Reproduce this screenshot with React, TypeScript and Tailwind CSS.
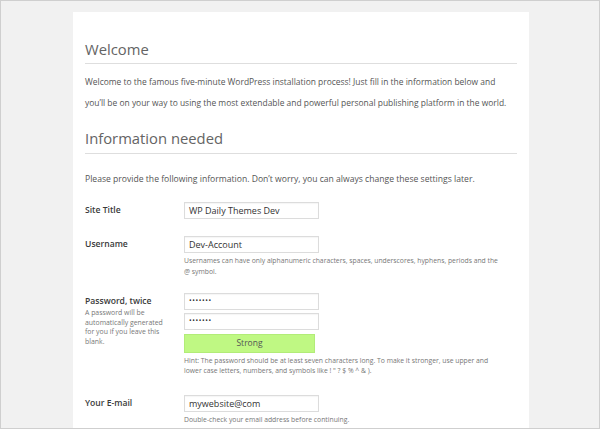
import React from "react";

const font = "font-['Open_Sans','Noto_Sans',sans-serif]";

interface FieldProps {
  label: string;
  children: React.ReactNode;
  note?: React.ReactNode;
  className?: string;
}

const Field: React.FC<FieldProps> = ({ label, children, note, className }) => {
  return (
    <div className={"flex " + (className ?? "")}>
      <div className="w-[99px] shrink-0 pt-[2px]">
        <p className="text-[8.6px] font-semibold leading-[12px] text-[#3a3a3a]">{label}</p>
        {note}
      </div>
      <div className="flex flex-col">{children}</div>
    </div>
  );
};

const TextBox: React.FC<{ value: string; dots?: boolean }> = ({ value, dots }) => {
  return (
    <div className="flex h-[17px] w-[135px] items-center border border-[#dcdcdc] bg-white pl-[4px] shadow-[inset_0_1px_1px_rgba(0,0,0,0.04)]">
      <span className={dots ? "text-[7px] tracking-[0.6px] text-[#333]" : "text-[9px] text-[#333]"}>{value}</span>
    </div>
  );
};

const Hint: React.FC<{ children: React.ReactNode; className?: string }> = ({ children, className }) => (
  <p className={"whitespace-nowrap text-[6.8px] text-[#777] " + (className ?? "")}>{children}</p>
);

export default function App() {
  return (
    <div className={"h-[429px] w-[600px] overflow-hidden border border-[#cfcfcf] bg-[#f1f1f1] pl-[72px] pt-[11px] " + font}>
      <div className="h-[420px] w-[456px] bg-white px-[12px] pt-[27px]">
        <h1 className="border-b border-[#dedede] pb-[4px] text-[14.8px] leading-[20px] text-[#646464]">Welcome</h1>
        <p className="mt-[8px] whitespace-nowrap text-[8.45px] leading-[20.5px] text-[#555]">
          Welcome to the famous five-minute WordPress installation process! Just fill in the information below and
          <br />
          you’ll be on your way to using the most extendable and powerful personal publishing platform in the world.
        </p>
        <h2 className="mt-[15px] border-b border-[#dedede] pb-[5px] text-[14.8px] leading-[20px] text-[#646464]">
          Information needed
        </h2>
        <p className="mt-[19px] text-[8.6px] leading-[12px] text-[#555]">
          Please provide the following information. Don’t worry, you can always change these settings later.
        </p>

        <Field label="Site Title" className="mt-[17px]">
          <TextBox value="WP Daily Themes Dev" />
        </Field>

        <Field label="Username" className="mt-[17px]">
          <TextBox value="Dev-Account" />
          <Hint className="mt-[2px] leading-[11px]">
            Usernames can have only alphanumeric characters, spaces, underscores, hyphens, periods and the
            <br />@ symbol.
          </Hint>
        </Field>

        <Field
          label="Password, twice"
          className="mt-[16px]"
          note={
            <p className="mt-[1px] whitespace-nowrap text-[6.9px] leading-[9.7px] text-[#777]">
              A password will be
              <br />
              automatically generated
              <br />
              for you if you leave this
              <br />
              blank.
            </p>
          }
        >
          <TextBox value="•••••••" dots />
          <div className="mt-[3px]">
            <TextBox value="•••••••" dots />
          </div>
          <div className="mt-[4px] flex h-[19px] w-[131px] items-center justify-center border border-[#b2ec78] bg-[#bff883] text-[8.5px] text-[#555]">
            Strong
          </div>
          <Hint className="mt-[3px] leading-[10px]">
            Hint: The password should be at least seven characters long. To make it stronger, use upper and
            <br />
            lower case letters, numbers, and symbols like ! " ? $ % ^ &amp; ).
          </Hint>
        </Field>

        <Field label="Your E-mail" className="mt-[19px]">
          <TextBox value="mywebsite@com" />
          <Hint className="mt-[2px] leading-[11px]">Double-check your email address before continuing.</Hint>
        </Field>
      </div>
    </div>
  );
}
